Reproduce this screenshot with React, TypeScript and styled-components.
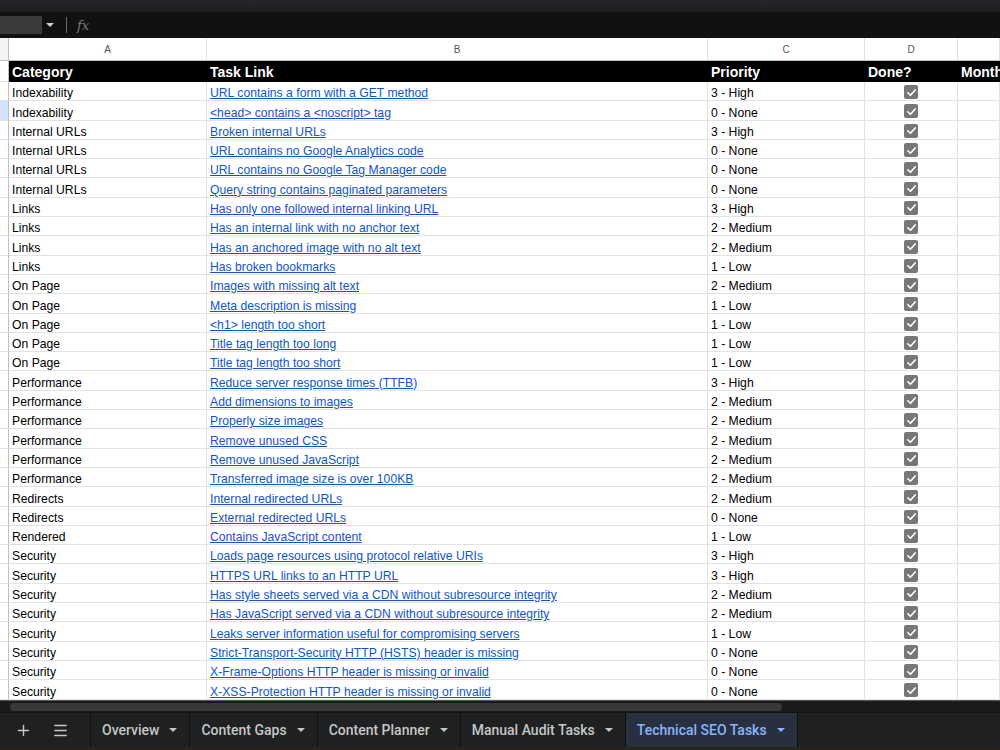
import * as React from 'react';
import styled, { createGlobalStyle } from 'styled-components';
import { Plus, Menu } from 'lucide-react';

const GlobalStyle = createGlobalStyle`
  html, body {
    margin: 0;
    padding: 0;
    background: #ffffff;
    overflow: hidden;
  }
  * { box-sizing: border-box; }
`

const Page = styled.div`
  width: 1000px;
  height: 750px;
  display: flex;
  flex-direction: column;
  font-family: Arial, "Liberation Sans", sans-serif;
`
const TopStrip = styled.div`
  height: 12px;
  background: linear-gradient(#24262a, #1c1d20);
`
const FormulaBar = styled.div`
  height: 26px;
  background: #111112;
  display: flex;
  align-items: center;
`
const NameBox = styled.div`
  width: 42px;
  height: 18px;
  background: #3b3b3c;
`
const Caret = styled.span`
  width: 0;
  height: 0;
  border-left: 4px solid transparent;
  border-right: 4px solid transparent;
  border-top: 4px solid #d0d0d0;
  margin-left: 4px;
`
const Divider = styled.span`
  width: 1px;
  height: 16px;
  background: #6a6a6a;
  margin-left: 12px;
`
const Fx = styled.span`
  font-family: "DejaVu Serif", "Liberation Serif", serif;
  font-style: italic;
  color: #7a7a7a;
  font-size: 13px;
  margin-left: 10px;
`

const cols = '9px 198px 501px 157px 93px 1fr';

const Grid = styled.div`
  flex: 1;
  display: flex;
  flex-direction: column;
  background: #fff;
  overflow: hidden;
`
const Row = styled.div<{ $h: number }>`
  display: grid;
  grid-template-columns: ${cols};
  height: ${p => p.$h}px;
  flex: none;
`
const RowNum = styled.div<{ $sel?: boolean; $head?: boolean }>`
  background: ${p => (p.$head ? '#f3f3f3' : p.$sel ? '#d3e3fd' : '#ffffff')};
  border-right: 1px solid #c0c0c0;
  border-bottom: 1px solid ${p => (p.$head ? '#c0c0c0' : '#e2e2e2')};
`
const ColLetter = styled.div`
  border-right: 1px solid #e0e0e0;
  border-bottom: 1px solid #c4c4c4;
  color: #555;
  font-size: 10px;
  display: flex;
  align-items: center;
  justify-content: center;
  padding-top: 1px;
`
const HeadCell = styled.div`
  background: #000;
  color: #fff;
  font-weight: bold;
  font-size: 14px;
  display: flex;
  align-items: center;
  padding: 0 3px;
  white-space: nowrap;
  overflow: hidden;
`
const Cell = styled.div<{ $center?: boolean }>`
  border-right: 1px solid #e2e2e2;
  border-bottom: 1px solid #e2e2e2;
  font-size: 12.2px;
  line-height: 14px;
  color: #000;
  display: flex;
  align-items: ${p => (p.$center ? 'center' : 'flex-end')};
  justify-content: ${p => (p.$center ? 'center' : 'flex-start')};
  padding: 0 3px;
  white-space: nowrap;
  overflow: hidden;
`
const Link = styled.a`
  color: #1155cc;
  text-decoration: underline;
`
const Check = styled.span`
  width: 14px;
  height: 14px;
  border-radius: 2px;
  background: #777777;
  display: flex;
  align-items: center;
  justify-content: center;
  margin-top: 2px;
`

const ScrollArea = styled.div`
  height: 12px;
  background: #1a1a1b;
  border-top: 1px solid #5a5a5a;
  display: flex;
  align-items: center;
  padding-left: 10px;
`
const Thumb = styled.div`
  width: 772px;
  height: 8px;
  border-radius: 4px;
  background: #373839;
`

const TabBar = styled.div`
  height: 38px;
  background: #1f2022;
  border-top: 1px solid #141414;
  border-bottom: 3px solid #2a221d;
  display: flex;
  align-items: stretch;
`
const IconBtn = styled.div`
  width: 37px;
  display: flex;
  align-items: center;
  justify-content: center;
  color: #c4c7c5;
  &:first-child { margin-left: 5px; }
`
const Spacer = styled.div`
  width: 11px;
`
const Tab = styled.div<{ $active?: boolean }>`
  display: flex;
  align-items: center;
  gap: 10px;
  padding: 0 12px 0 11px;
  border-left: 1px solid #0f0f10;
  background: ${p => (p.$active ? '#283040' : 'transparent')};
  color: ${p => (p.$active ? '#8ab4f8' : '#c4c7c5')};
  font-family: Roboto, "Liberation Sans", sans-serif;
  font-weight: 500;
  font-size: 14px;
  &:last-child { border-right: 1px solid #0f0f10; }
`
const TabCaret = styled.span`
  width: 0;
  height: 0;
  border-left: 4px solid transparent;
  border-right: 4px solid transparent;
  border-top: 4px solid currentColor;
`

const rows: [string, string, string][] = [
  ['Indexability', 'URL contains a form with a GET method', '3 - High'],
  ['Indexability', '<head> contains a <noscript> tag', '0 - None'],
  ['Internal URLs', 'Broken internal URLs', '3 - High'],
  ['Internal URLs', 'URL contains no Google Analytics code', '0 - None'],
  ['Internal URLs', 'URL contains no Google Tag Manager code', '0 - None'],
  ['Internal URLs', 'Query string contains paginated parameters', '0 - None'],
  ['Links', 'Has only one followed internal linking URL', '3 - High'],
  ['Links', 'Has an internal link with no anchor text', '2 - Medium'],
  ['Links', 'Has an anchored image with no alt text', '2 - Medium'],
  ['Links', 'Has broken bookmarks', '1 - Low'],
  ['On Page', 'Images with missing alt text', '2 - Medium'],
  ['On Page', 'Meta description is missing', '1 - Low'],
  ['On Page', '<h1> length too short', '1 - Low'],
  ['On Page', 'Title tag length too long', '1 - Low'],
  ['On Page', 'Title tag length too short', '1 - Low'],
  ['Performance', 'Reduce server response times (TTFB)', '3 - High'],
  ['Performance', 'Add dimensions to images', '2 - Medium'],
  ['Performance', 'Properly size images', '2 - Medium'],
  ['Performance', 'Remove unused CSS', '2 - Medium'],
  ['Performance', 'Remove unused JavaScript', '2 - Medium'],
  ['Performance', 'Transferred image size is over 100KB', '2 - Medium'],
  ['Redirects', 'Internal redirected URLs', '2 - Medium'],
  ['Redirects', 'External redirected URLs', '0 - None'],
  ['Rendered', 'Contains JavaScript content', '1 - Low'],
  ['Security', 'Loads page resources using protocol relative URIs', '3 - High'],
  ['Security', 'HTTPS URL links to an HTTP URL', '3 - High'],
  ['Security', 'Has style sheets served via a CDN without subresource integrity', '2 - Medium'],
  ['Security', 'Has JavaScript served via a CDN without subresource integrity', '2 - Medium'],
  ['Security', 'Leaks server information useful for compromising servers', '1 - Low'],
  ['Security', 'Strict-Transport-Security HTTP (HSTS) header is missing', '0 - None'],
  ['Security', 'X-Frame-Options HTTP header is missing or invalid', '0 - None'],
  ['Security', 'X-XSS-Protection HTTP header is missing or invalid', '0 - None'],
];

const tabs = ['Overview', 'Content Gaps', 'Content Planner', 'Manual Audit Tasks', 'Technical SEO Tasks'];

const CheckMark = () => (
  <Check>
    <svg width="11" height="11" viewBox="0 0 12 12">
      <path d="M2 6.3 L4.8 9 L10 3.2" fill="none" stroke="#fff" strokeWidth="1.8" strokeLinecap="round" strokeLinejoin="round" />
    </svg>
  </Check>
);

const App: React.FC = () => {
  return (
    <Page>
      <GlobalStyle />
      <TopStrip />
      <FormulaBar>
        <NameBox />
        <Caret />
        <Divider />
        <Fx>fx</Fx>
      </FormulaBar>
      <Grid>
        <Row $h={23}>
          <RowNum $head />
          <ColLetter>A</ColLetter>
          <ColLetter>B</ColLetter>
          <ColLetter>C</ColLetter>
          <ColLetter>D</ColLetter>
          <ColLetter />
        </Row>
        <Row $h={21}>
          <RowNum />
          <HeadCell>Category</HeadCell>
          <HeadCell>Task Link</HeadCell>
          <HeadCell>Priority</HeadCell>
          <HeadCell>Done?</HeadCell>
          <HeadCell>Month</HeadCell>
        </Row>
        {rows.map(([cat, task, prio], i) => (
          <Row $h={19.31} key={i}>
            <RowNum $sel={i === 1} />
            <Cell>{cat}</Cell>
            <Cell><Link>{task}</Link></Cell>
            <Cell>{prio}</Cell>
            <Cell $center><CheckMark /></Cell>
            <Cell />
          </Row>
        ))}
      </Grid>
      <ScrollArea>
        <Thumb />
      </ScrollArea>
      <TabBar>
        <IconBtn><Plus size={17} strokeWidth={2} /></IconBtn>
        <IconBtn><Menu size={17} strokeWidth={2} /></IconBtn>
        <Spacer />
        {tabs.map((t, i) => (
          <Tab key={t} $active={i === tabs.length - 1}>
            {t}
            <TabCaret />
          </Tab>
        ))}
      </TabBar>
    </Page>
  );
};

export default App;
